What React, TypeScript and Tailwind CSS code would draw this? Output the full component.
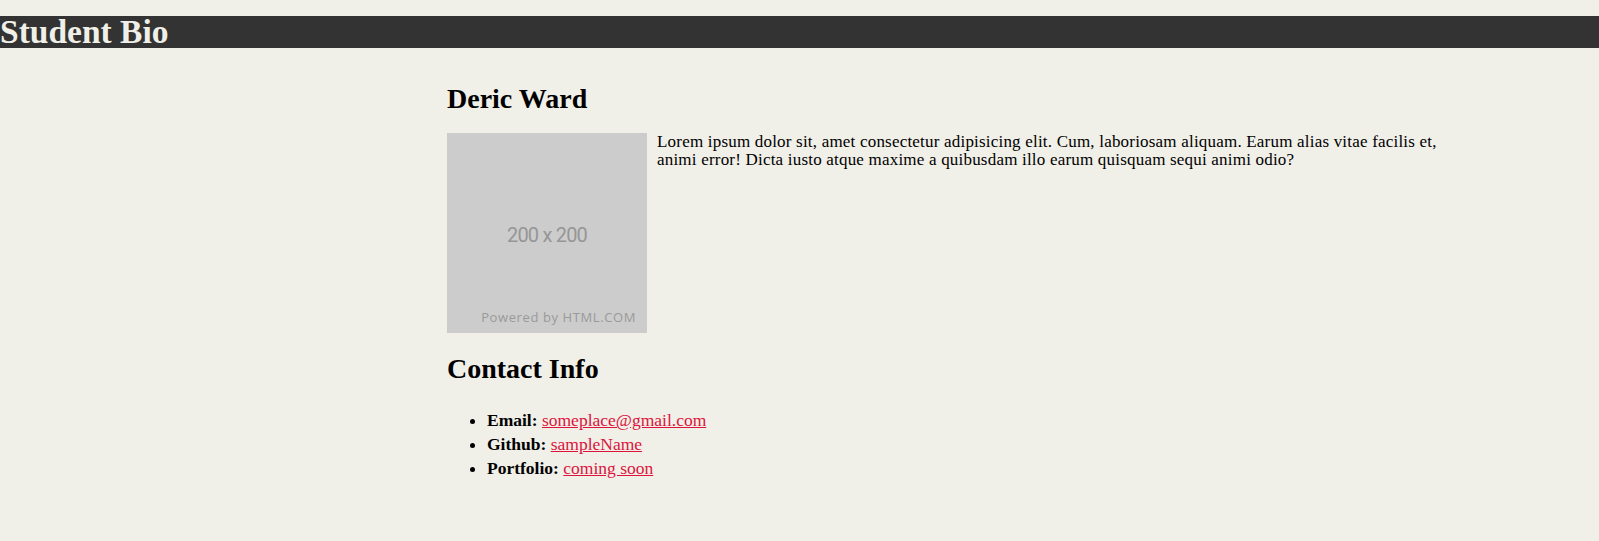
import React from "react";

const serif = { fontFamily: '"Liberation Serif", Georgia, serif' };

function Placeholder() {
  return (
    <div className="relative float-left mr-[10px] h-[200px] w-[200px] bg-[#cccccc]">
      <span
        className="absolute left-0 right-0 top-[90px] text-center text-[20px] leading-[24px] tracking-[-0.8px] text-[#969696]"
        style={{ fontFamily: "Roboto, sans-serif" }}
      >
        200 x 200
      </span>
      <span
        className="absolute right-[11px] top-[176px] text-[13px] leading-[16px] tracking-[0.6px] text-[#9a9a9a]"
        style={{ fontFamily: '"Open Sans", sans-serif' }}
      >
        Powered by HTML.COM
      </span>
    </div>
  );
}

export default function App() {
  return (
    <div className="min-h-[541px] bg-[#f0efe8] pt-4 text-black" style={serif}>
      <h1 className="h-8 bg-[#333333] text-[33.5px] font-bold leading-[32px] text-[#f0efe8]">
        Student Bio
      </h1>

      <main className="ml-[447px] w-[1010px]">
        <h2 className="mt-[37px] text-[28px] font-bold leading-[28px]">Deric Ward</h2>

        <div className="mt-[20px] flow-root">
          <Placeholder />
          <p className="text-[17px] leading-[18px] tracking-[0.2px]">
            Lorem ipsum dolor sit, amet consectetur adipisicing elit. Cum, laboriosam aliquam. Earum
            alias vitae facilis et, animi error! Dicta iusto atque maxime a quibusdam illo earum
            quisquam sequi animi odio?
          </p>
        </div>

        <h2 className="mt-[22px] text-[28px] font-bold leading-[28px]">Contact Info</h2>

        <ul className="mt-[25px] list-disc pl-10 text-[17.5px] leading-[24px]">
          <li>
            <strong>Email:</strong>{" "}
            <a href="#" className="text-[#dc143c] underline">
              someplace@gmail.com
            </a>
          </li>
          <li>
            <strong>Github:</strong>{" "}
            <a href="#" className="text-[#dc143c] underline">
              sampleName
            </a>
          </li>
          <li>
            <strong>Portfolio:</strong>{" "}
            <a href="#" className="text-[#dc143c] underline">
              coming soon
            </a>
          </li>
        </ul>
      </main>
    </div>
  );
}
